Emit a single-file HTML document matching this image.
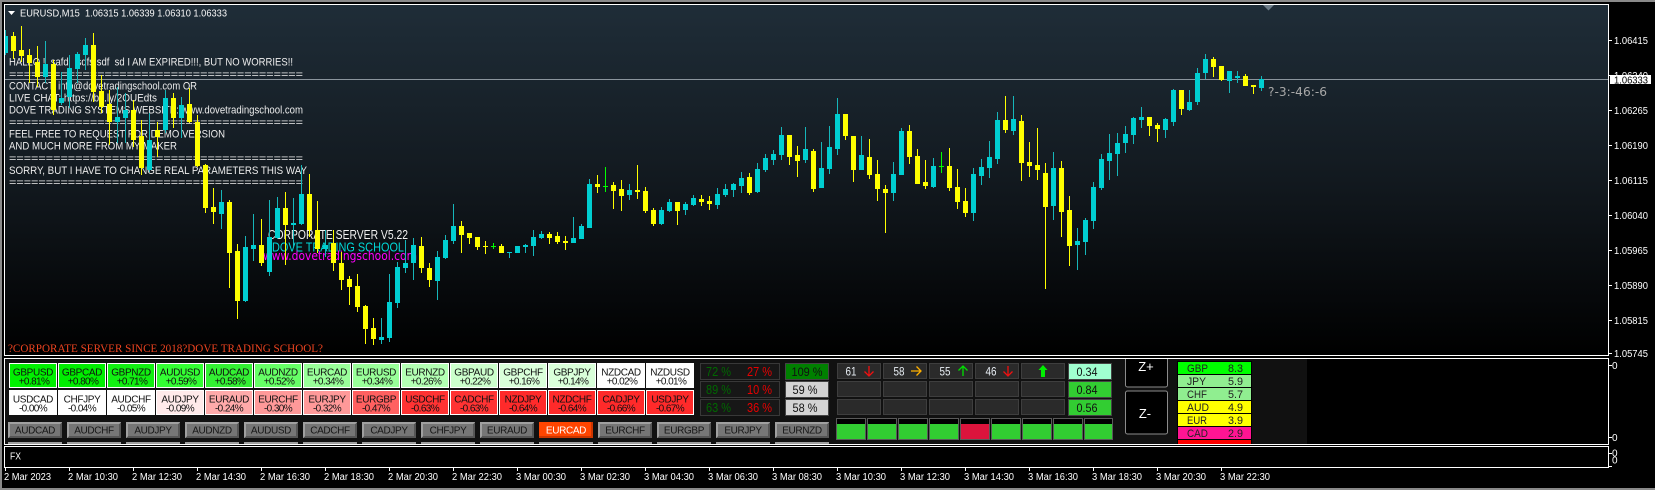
<!DOCTYPE html>
<html><head><meta charset="utf-8"><title>EURUSD,M15</title>
<style>
html,body{margin:0;padding:0;background:#000;width:1655px;height:490px;overflow:hidden}
svg{display:block}
text{font-family:"Liberation Sans",sans-serif;white-space:pre}
.o{font-size:11px;fill:#ececec}
.a{font-size:10px;fill:#fff}
.t{font-size:10px;fill:#fff}
.n{font-size:10px;letter-spacing:-.35px;text-anchor:middle;fill:#111}
.p{font-size:10px;letter-spacing:-.6px;text-anchor:middle;fill:#111}
.b{font-size:10px;letter-spacing:-.35px;text-anchor:middle;fill:#161616}
.g{font-size:13px;fill:#006800}
.r{font-size:13px;fill:#e80000}
.k{font-size:12px;fill:#111;text-anchor:middle}
.w{font-size:12px;fill:#e8eef4;text-anchor:middle}
.c{font-size:11px;fill:#222}
</style></head><body>
<svg width="1655" height="490" viewBox="0 0 1655 490" xmlns="http://www.w3.org/2000/svg">
<defs>
<linearGradient id="bg" x1="0" y1="0" x2="0" y2="1"><stop offset="0" stop-color="#1f2d38"/><stop offset=".5" stop-color="#12191f"/><stop offset="1" stop-color="#000"/></linearGradient>
<g id="btn"><rect width="54" height="16" fill="#a0a0a0"/><path d="M54 0V16H0L2 14H52V2Z" fill="#565656"/><rect x="2" y="2" width="50" height="12" fill="#767676"/></g>
</defs>
<rect width="1655" height="490" fill="#000"/>
<g shape-rendering="crispEdges">
<rect width="1655" height="2" fill="#8a8a8a"/><rect width="2" height="490" fill="#8a8a8a"/><rect y="488" width="1655" height="2" fill="#8a8a8a"/>
<rect x="5" y="5" width="1603" height="350" fill="url(#bg)"/>
</g>

<g class="overlay">
<text class="o" x="9" y="65.500" textLength="284" lengthAdjust="spacingAndGlyphs">HALLO !  safd   sdfs sdf  sd I AM EXPIRED!!!, BUT NO WORRIES!!</text>
<text class="o" x="9" y="78" textLength="294" lengthAdjust="spacingAndGlyphs">========================================</text>
<text class="o" x="9" y="89.500" textLength="188" lengthAdjust="spacingAndGlyphs">CONTACT: info@dovetradingschool.com OR</text>
<text class="o" x="9" y="101.500" textLength="148" lengthAdjust="spacingAndGlyphs">LIVE CHAT: https://bit.ly/2OUEdts</text>
<text class="o" x="9" y="113.500" textLength="294" lengthAdjust="spacingAndGlyphs">DOVE TRADING SYSTEMS WEBSITE: www.dovetradingschool.com</text>
<text class="o" x="9" y="126" textLength="294" lengthAdjust="spacingAndGlyphs">========================================</text>
<text class="o" x="9" y="137.500" textLength="216" lengthAdjust="spacingAndGlyphs">FEEL FREE TO REQUEST FOR DEMO VERSION</text>
<text class="o" x="9" y="149.500" textLength="168" lengthAdjust="spacingAndGlyphs">AND MUCH MORE FROM MY MAKER</text>
<text class="o" x="9" y="162" textLength="294" lengthAdjust="spacingAndGlyphs">========================================</text>
<text class="o" x="9" y="174" textLength="298" lengthAdjust="spacingAndGlyphs">SORRY, BUT I HAVE TO CHANGE REAL PARAMETERS THIS WAY</text>
<text class="o" x="9" y="186" textLength="294" lengthAdjust="spacingAndGlyphs">========================================</text>
<text x="268" y="239" font-size="13" fill="#f0f0f0" textLength="140" lengthAdjust="spacingAndGlyphs">CORPORATE SERVER V5.22</text>
<text x="272" y="251.500" font-size="13" fill="#00d8d8" textLength="132" lengthAdjust="spacingAndGlyphs">DOVE TRADING SCHOOL</text>
<text x="263" y="260" font-size="12" fill="#ff00ff" textLength="154" lengthAdjust="spacingAndGlyphs" style="font-family:'DejaVu Sans',sans-serif">www.dovetradingschool.com</text>
<text x="8" y="352" font-size="12" fill="#ee4420" textLength="315" lengthAdjust="spacingAndGlyphs" style="font-family:'Liberation Serif',serif">?CORPORATE SERVER SINCE 2018?DOVE TRADING SCHOOL?</text>
</g>

<rect x="5" y="79" width="1603" height="1" fill="#8b959d" shape-rendering="crispEdges"/>

<g fill="none" shape-rendering="crispEdges">
<path stroke="#ffff00" stroke-width="1" d="M13.5 32V59M21.5 26V62M29.5 49V83M37.5 46V87M53.5 60V115M93.5 33V102M101.5 75V113M109.5 90V145M133.5 100V147M141.5 120V175M157.5 122V157M173.5 93V128M189.5 88V123M197.5 115V167M205.5 164V213M213.5 188V224M229.5 200V288M237.5 244V319M261.5 219V266M285.5 192V265M309.5 174V237M317.5 201V253M333.5 230V271M341.5 252V290M349.5 276V305M357.5 274V312M365.5 305V344M373.5 318V345M421.5 237V273M429.5 263V287M461.5 221V253M469.5 233V244M477.5 237V250M485.5 241V254M501.5 244V253M549.5 232V244M557.5 232V244M565.5 236V250M597.5 175V193M613.5 182V209M621.5 180V211M637.5 165V199M645.5 187V213M653.5 208V226M677.5 202V225M701.5 195V206M709.5 196V210M749.5 173V195M789.5 135V165M797.5 146V177M813.5 149V192M845.5 114V140M853.5 136V182M869.5 139V179M877.5 160V201M885.5 185V233M909.5 125V164M917.5 149V184M925.5 160V189M949.5 148V191M957.5 169V209M965.5 188V217M1005.5 96V133M1021.5 115V181M1029.5 142V177M1037.5 128V180M1045.5 163V289M1061.5 161V237M1069.5 196V266M1149.5 117V136M1157.5 123V142M1181.5 90V115M1213.5 57V77M1221.5 66V81M1245.5 74V86M1253.5 85V94"/>
<path stroke="#ffff00" stroke-width="5" d="M13.5 36V51M21.5 50V56M29.5 55V63M37.5 62V77M53.5 64V110M93.5 45V92M101.5 91V107M109.5 104V122M133.5 110V140M141.5 136V168M157.5 130V137M173.5 98V118M189.5 104V122M197.5 122V166M205.5 165V208M213.5 207V212M229.5 202V253M237.5 251V301M261.5 245V263M285.5 208V225M309.5 194V230M317.5 230V249M333.5 243V263M341.5 263V280M349.5 279V287M357.5 286V307M365.5 306V329M373.5 328V339M421.5 246V268M429.5 268V280M461.5 226V235M469.5 233V238M477.5 237V247M485.5 246V247M501.5 246V253M549.5 234V238M557.5 236V242M565.5 241V243M597.5 184V187M613.5 185V191M621.5 189V196M637.5 190V192M645.5 191V211M653.5 210V224M677.5 202V211M701.5 199V202M709.5 201V204M749.5 177V193M789.5 135V157M797.5 155V161M813.5 151V189M845.5 114V136M853.5 136V170M869.5 157V175M877.5 174V189M885.5 189V193M909.5 131V157M917.5 156V184M925.5 182V186M949.5 166V188M957.5 187V202M965.5 201V213M1005.5 120V130M1021.5 121V163M1029.5 162V166M1037.5 165V170M1045.5 173V207M1061.5 168V212M1069.5 210V246M1149.5 117V126M1157.5 125V129M1181.5 90V109M1213.5 59V67M1221.5 66V80M1245.5 76V86M1253.5 85V87"/>
<path stroke="#16b6ba" stroke-width="1" d="M5.5 30V55M45.5 41V83M61.5 72V105M69.5 55V108M77.5 52V83M85.5 38V70M117.5 87V143M125.5 93V143M149.5 113V172M165.5 90V133M181.5 97V138M221.5 190V229M245.5 236V302M253.5 214V261M269.5 200V276M277.5 197V239M293.5 198V247M301.5 165V225M325.5 230V257M381.5 318V344M389.5 274V342M397.5 262V308M405.5 240V273M413.5 238V280M437.5 251V300M445.5 235V259M453.5 204V244M509.5 252V258M517.5 246V253M525.5 244V253M533.5 230V256M541.5 231V239M573.5 217V243M581.5 224V239M589.5 179V228M629.5 184V200M661.5 207V225M669.5 199V212M685.5 202V215M693.5 195V206M717.5 188V209M725.5 184V197M733.5 183V197M741.5 172V193M757.5 163V193M765.5 154V172M773.5 150V165M781.5 127V160M805.5 127V163M821.5 142V188M829.5 126V174M837.5 98V155M861.5 136V170M893.5 162V201M901.5 128V175M933.5 158V188M973.5 168V221M981.5 159V185M989.5 141V178M997.5 112V164M1013.5 96V135M1053.5 152V220M1077.5 228V270M1085.5 218V255M1093.5 182V229M1101.5 154V190M1109.5 134V180M1117.5 133V176M1125.5 126V153M1133.5 117V144M1141.5 107V128M1165.5 118V138M1173.5 89V126M1189.5 90V111M1197.5 68V105M1205.5 54V79M1229.5 71V93M1237.5 71V83M1261.5 76V91"/>
<path stroke="#00ced1" stroke-width="5" d="M45.5 64V77M61.5 98V103M69.5 68V97M77.5 54V69M85.5 45V55M117.5 117V122M125.5 110V118M149.5 140V170M165.5 98V130M181.5 105V118M221.5 202V214M245.5 247V301M253.5 245V249M269.5 237V272M277.5 208V238M293.5 223V225M301.5 194V224M325.5 245V249M381.5 337V340M389.5 302V338M397.5 267V303M405.5 263V268M413.5 245V263M437.5 257V281M445.5 240V258M453.5 226V241M509.5 252V253M517.5 246V253M525.5 245V247M533.5 237V246M541.5 234V238M573.5 238V243M581.5 226V239M589.5 184V228M629.5 190V195M661.5 210V224M669.5 202V211M685.5 204V210M693.5 198V205M717.5 194V205M725.5 189V195M733.5 184V190M741.5 178V186M757.5 169V192M765.5 158V170M773.5 154V160M781.5 135V155M805.5 149V160M821.5 168V188M829.5 147V169M837.5 114V149M861.5 155V170M893.5 174V193M901.5 131V175M933.5 166V187M973.5 174V213M981.5 167V176M989.5 157V168M997.5 120V159M1013.5 119V131M1053.5 168V206M1077.5 241V245M1085.5 220V242M1093.5 187V221M1101.5 159V188M1109.5 153V161M1117.5 143V154M1125.5 134V143M1133.5 118V135M1141.5 117V120M1165.5 119V130M1173.5 90V122M1189.5 102V110M1197.5 73V102M1205.5 59V73M1229.5 71V81M1237.5 76V78M1261.5 79V88"/>
<rect x="5" y="36" width="3" height="17" fill="#00ced1"/>
<path stroke="#00ff00" stroke-width="1" d="M493.5 243V249M605.5 167V192M941.5 152V173M491 246.5H496M603 186.5H608M939 166.5H944"/>
</g>

<path d="M1263 5h11l-5.500 5.500z" fill="#6d7c88"/>
<path d="M8 11h7l-3.500 4z" fill="#fff"/>
<text x="20" y="16.500" font-size="10.500" fill="#f8f8f8" textLength="207" lengthAdjust="spacingAndGlyphs">EURUSD,M15  1.06315 1.06339 1.06310 1.06333</text>
<text x="1268" y="96" font-size="12" fill="#a8a8a8" textLength="59" lengthAdjust="spacingAndGlyphs" style="font-family:'DejaVu Sans',sans-serif">?-3:-46:-6</text>

<g shape-rendering="crispEdges" fill="#fff">
<rect x="4" y="4" width="1605" height="1"/>
<rect x="4" y="4" width="1" height="352"/>
<rect x="1608" y="4" width="1" height="352"/>
<rect x="4" y="355" width="1605" height="1"/>
</g>

<rect x="5" y="359" width="1302" height="85" fill="#111" shape-rendering="crispEdges"/>

<g shape-rendering="crispEdges">
<rect x="9" y="363" width="48" height="25" fill="#fff"/><rect x="10" y="364" width="46" height="23" fill="#00f000"/>
<rect x="58" y="363" width="48" height="25" fill="#fff"/><rect x="59" y="364" width="46" height="23" fill="#00ee00"/>
<rect x="107" y="363" width="48" height="25" fill="#fff"/><rect x="108" y="364" width="46" height="23" fill="#11f011"/>
<rect x="156" y="363" width="48" height="25" fill="#fff"/><rect x="157" y="364" width="46" height="23" fill="#33ff33"/>
<rect x="205" y="363" width="48" height="25" fill="#fff"/><rect x="206" y="364" width="46" height="23" fill="#33f033"/>
<rect x="254" y="363" width="48" height="25" fill="#fff"/><rect x="255" y="364" width="46" height="23" fill="#66ff66"/>
<rect x="303" y="363" width="48" height="25" fill="#fff"/><rect x="304" y="364" width="46" height="23" fill="#99ff99"/>
<rect x="352" y="363" width="48" height="25" fill="#fff"/><rect x="353" y="364" width="46" height="23" fill="#99ff99"/>
<rect x="401" y="363" width="48" height="25" fill="#fff"/><rect x="402" y="364" width="46" height="23" fill="#b3ffb3"/>
<rect x="450" y="363" width="48" height="25" fill="#fff"/><rect x="451" y="364" width="46" height="23" fill="#ccffcc"/>
<rect x="499" y="363" width="48" height="25" fill="#fff"/><rect x="500" y="364" width="46" height="23" fill="#d9ffd9"/>
<rect x="548" y="363" width="48" height="25" fill="#fff"/><rect x="549" y="364" width="46" height="23" fill="#d9ffd9"/>
<rect x="597" y="363" width="48" height="25" fill="#fff"/>
<rect x="646" y="363" width="48" height="25" fill="#fff"/>

<rect x="9" y="390" width="48" height="25" fill="#fff"/>
<rect x="58" y="390" width="48" height="25" fill="#fff"/>
<rect x="107" y="390" width="48" height="25" fill="#fff"/>
<rect x="156" y="390" width="48" height="25" fill="#fff"/><rect x="157" y="391" width="46" height="23" fill="#ffeaea"/>
<rect x="205" y="390" width="48" height="25" fill="#fff"/><rect x="206" y="391" width="46" height="23" fill="#ffaaaa"/>
<rect x="254" y="390" width="48" height="25" fill="#fff"/><rect x="255" y="391" width="46" height="23" fill="#ff9999"/>
<rect x="303" y="390" width="48" height="25" fill="#fff"/><rect x="304" y="391" width="46" height="23" fill="#ff9999"/>
<rect x="352" y="390" width="48" height="25" fill="#fff"/><rect x="353" y="391" width="46" height="23" fill="#ff6060"/>
<rect x="401" y="390" width="48" height="25" fill="#fff"/><rect x="402" y="391" width="46" height="23" fill="#ff3333"/>
<rect x="450" y="390" width="48" height="25" fill="#fff"/><rect x="451" y="391" width="46" height="23" fill="#ff3333"/>
<rect x="499" y="390" width="48" height="25" fill="#fff"/><rect x="500" y="391" width="46" height="23" fill="#ff2a2a"/>
<rect x="548" y="390" width="48" height="25" fill="#fff"/><rect x="549" y="391" width="46" height="23" fill="#ff2a2a"/>
<rect x="597" y="390" width="48" height="25" fill="#fff"/><rect x="598" y="391" width="46" height="23" fill="#ff2a2a"/>
<rect x="646" y="390" width="48" height="25" fill="#fff"/><rect x="647" y="391" width="46" height="23" fill="#ff2a2a"/>
</g>

<g>
<text class="n" x="33" y="375.500">GBPUSD</text><text class="p" x="34" y="384.500">+0.81%</text>
<text class="n" x="82" y="375.500">GBPCAD</text><text class="p" x="83" y="384.500">+0.80%</text>
<text class="n" x="131" y="375.500">GBPNZD</text><text class="p" x="132" y="384.500">+0.71%</text>
<text class="n" x="180" y="375.500">AUDUSD</text><text class="p" x="181" y="384.500">+0.59%</text>
<text class="n" x="229" y="375.500">AUDCAD</text><text class="p" x="230" y="384.500">+0.58%</text>
<text class="n" x="278" y="375.500">AUDNZD</text><text class="p" x="279" y="384.500">+0.52%</text>
<text class="n" x="327" y="375.500">EURCAD</text><text class="p" x="328" y="384.500">+0.34%</text>
<text class="n" x="376" y="375.500">EURUSD</text><text class="p" x="377" y="384.500">+0.34%</text>
<text class="n" x="425" y="375.500">EURNZD</text><text class="p" x="426" y="384.500">+0.26%</text>
<text class="n" x="474" y="375.500">GBPAUD</text><text class="p" x="475" y="384.500">+0.22%</text>
<text class="n" x="523" y="375.500">GBPCHF</text><text class="p" x="524" y="384.500">+0.16%</text>
<text class="n" x="572" y="375.500">GBPJPY</text><text class="p" x="573" y="384.500">+0.14%</text>
<text class="n" x="621" y="375.500">NZDCAD</text><text class="p" x="622" y="384.500">+0.02%</text>
<text class="n" x="670" y="375.500">NZDUSD</text><text class="p" x="671" y="384.500">+0.01%</text>
<text class="n" x="33" y="402.500">USDCAD</text><text class="p" x="33" y="411.500">-0.00%</text>
<text class="n" x="82" y="402.500">CHFJPY</text><text class="p" x="82" y="411.500">-0.04%</text>
<text class="n" x="131" y="402.500">AUDCHF</text><text class="p" x="131" y="411.500">-0.05%</text>
<text class="n" x="180" y="402.500">AUDJPY</text><text class="p" x="180" y="411.500">-0.09%</text>
<text class="n" x="229" y="402.500">EURAUD</text><text class="p" x="229" y="411.500">-0.24%</text>
<text class="n" x="278" y="402.500">EURCHF</text><text class="p" x="278" y="411.500">-0.30%</text>
<text class="n" x="327" y="402.500">EURJPY</text><text class="p" x="327" y="411.500">-0.32%</text>
<text class="n" x="376" y="402.500">EURGBP</text><text class="p" x="376" y="411.500">-0.47%</text>
<text class="n" x="425" y="402.500">USDCHF</text><text class="p" x="425" y="411.500">-0.63%</text>
<text class="n" x="474" y="402.500">CADCHF</text><text class="p" x="474" y="411.500">-0.63%</text>
<text class="n" x="523" y="402.500">NZDJPY</text><text class="p" x="523" y="411.500">-0.64%</text>
<text class="n" x="572" y="402.500">NZDCHF</text><text class="p" x="572" y="411.500">-0.64%</text>
<text class="n" x="621" y="402.500">CADJPY</text><text class="p" x="621" y="411.500">-0.66%</text>
<text class="n" x="670" y="402.500">USDJPY</text><text class="p" x="670" y="411.500">-0.67%</text>
</g>

<g shape-rendering="crispEdges">
<use href="#btn" x="8" y="422"/><use href="#btn" x="67" y="422"/><use href="#btn" x="126" y="422"/><use href="#btn" x="185" y="422"/><use href="#btn" x="244" y="422"/><use href="#btn" x="303" y="422"/><use href="#btn" x="362" y="422"/><use href="#btn" x="421" y="422"/><use href="#btn" x="480" y="422"/>
<rect x="539" y="422" width="54" height="16" fill="#ff4500"/><rect x="539" y="436" width="54" height="2" fill="#cc3600"/><rect x="591" y="422" width="2" height="16" fill="#cc3600"/>
<use href="#btn" x="598" y="422"/><use href="#btn" x="657" y="422"/><use href="#btn" x="716" y="422"/><use href="#btn" x="775" y="422"/>
<path fill="#a0a0a0" d="M8 442h54v2H8zM67 442h54v2H67zM126 442h54v2h-54zM185 442h54v2h-54zM244 442h54v2h-54zM303 442h54v2h-54zM362 442h54v2h-54zM421 442h54v2h-54zM480 442h54v2h-54zM539 442h54v2h-54zM598 442h54v2h-54zM657 442h54v2h-54zM716 442h54v2h-54zM775 442h54v2h-54z"/>
</g>
<g>
<text class="b" x="35" y="433.500">AUDCAD</text><text class="b" x="94" y="433.500">AUDCHF</text><text class="b" x="153" y="433.500">AUDJPY</text><text class="b" x="212" y="433.500">AUDNZD</text><text class="b" x="271" y="433.500">AUDUSD</text><text class="b" x="330" y="433.500">CADCHF</text><text class="b" x="389" y="433.500">CADJPY</text><text class="b" x="448" y="433.500">CHFJPY</text><text class="b" x="507" y="433.500">EURAUD</text><text class="b" x="566" y="433.500" style="fill:#fff">EURCAD</text><text class="b" x="625" y="433.500">EURCHF</text><text class="b" x="684" y="433.500">EURGBP</text><text class="b" x="743" y="433.500">EURJPY</text><text class="b" x="802" y="433.500">EURNZD</text>
</g>

<g shape-rendering="crispEdges" fill="#171717" stroke="#383838">
<rect x="700.500" y="363.500" width="79" height="16"/><rect x="700.500" y="381.500" width="79" height="16"/><rect x="700.500" y="399.500" width="79" height="16"/>
</g>
<g>
<text class="g" x="706" y="376" textLength="25" lengthAdjust="spacingAndGlyphs">72 %</text><text class="r" x="747" y="376" textLength="25" lengthAdjust="spacingAndGlyphs">27 %</text>
<text class="g" x="706" y="394" textLength="25" lengthAdjust="spacingAndGlyphs">89 %</text><text class="r" x="747" y="394" textLength="25" lengthAdjust="spacingAndGlyphs">10 %</text>
<text class="g" x="706" y="412" textLength="25" lengthAdjust="spacingAndGlyphs">63 %</text><text class="r" x="747" y="412" textLength="25" lengthAdjust="spacingAndGlyphs">36 %</text>
</g>
<g shape-rendering="crispEdges" stroke="#444">
<rect x="785.500" y="363.500" width="43" height="16" fill="#008000"/><rect x="785.500" y="381.500" width="43" height="16" fill="#d3d3d3"/><rect x="785.500" y="399.500" width="43" height="16" fill="#d3d3d3"/>
</g>
<text class="k" x="807" y="376" textLength="31" lengthAdjust="spacingAndGlyphs">109 %</text>
<text class="k" x="805" y="394" textLength="25" lengthAdjust="spacingAndGlyphs">59 %</text>
<text class="k" x="805" y="412" textLength="25" lengthAdjust="spacingAndGlyphs">58 %</text>

<g shape-rendering="crispEdges" fill="#2a2a2a" stroke="#3e3e3e">
<rect x="837.500" y="363.500" width="43" height="15"/><rect x="883.500" y="363.500" width="43" height="15"/><rect x="929.500" y="363.500" width="43" height="15"/><rect x="975.500" y="363.500" width="43" height="15"/><rect x="1021.500" y="363.500" width="43" height="15"/>
<rect x="837.500" y="381.500" width="43" height="15"/><rect x="883.500" y="381.500" width="43" height="15"/><rect x="929.500" y="381.500" width="43" height="15"/><rect x="975.500" y="381.500" width="43" height="15"/><rect x="1021.500" y="381.500" width="43" height="15"/>
<rect x="837.500" y="399.500" width="43" height="15"/><rect x="883.500" y="399.500" width="43" height="15"/><rect x="929.500" y="399.500" width="43" height="15"/><rect x="975.500" y="399.500" width="43" height="15"/><rect x="1021.500" y="399.500" width="43" height="15"/>
</g>
<text class="w" x="851" y="375.500" textLength="11" lengthAdjust="spacingAndGlyphs">61</text><text class="w" x="899" y="375.500" textLength="11" lengthAdjust="spacingAndGlyphs">58</text><text class="w" x="945" y="375.500" textLength="11" lengthAdjust="spacingAndGlyphs">55</text><text class="w" x="991" y="375.500" textLength="11" lengthAdjust="spacingAndGlyphs">46</text>
<g fill="none" stroke-width="1.300">
<path stroke="#f01010" d="M869 366V376M864.500 371.500L869 376L873.500 371.500"/>
<path stroke="#ffb000" d="M911 371H921M916.500 366.500L921 371L916.500 375.500"/>
<path stroke="#00e000" d="M963 376V366M958.500 370.500L963 366L967.500 370.500"/>
<path stroke="#f01010" d="M1008 366V376M1003.500 371.500L1008 376L1012.500 371.500"/>
</g>
<path fill="#00ee00" d="M1043 365l4.500 5h-2.500v7h-4v-7h-2.500z"/>
<g shape-rendering="crispEdges" stroke="#444">
<rect x="1068.500" y="363.500" width="43" height="16" fill="#a0ffd0"/><rect x="1068.500" y="381.500" width="43" height="16" fill="#32cd32"/><rect x="1068.500" y="399.500" width="43" height="16" fill="#32cd32"/>
</g>
<text class="k" x="1087" y="376" textLength="21" lengthAdjust="spacingAndGlyphs">0.34</text><text class="k" x="1087" y="394" textLength="21" lengthAdjust="spacingAndGlyphs">0.84</text><text class="k" x="1087" y="412" textLength="21" lengthAdjust="spacingAndGlyphs">0.56</text>

<g shape-rendering="crispEdges" stroke="#5a5a5a">
<rect x="836.500" y="418.500" width="29" height="21" fill="#000"/><rect x="867.500" y="418.500" width="29" height="21" fill="#000"/><rect x="898.500" y="418.500" width="29" height="21" fill="#000"/><rect x="929.500" y="418.500" width="29" height="21" fill="#000"/><rect x="960.500" y="418.500" width="29" height="21" fill="#000"/><rect x="991.500" y="418.500" width="29" height="21" fill="#000"/><rect x="1022.500" y="418.500" width="29" height="21" fill="#000"/><rect x="1053.500" y="418.500" width="29" height="21" fill="#000"/><rect x="1084.500" y="418.500" width="28" height="21" fill="#000"/>
</g>
<g shape-rendering="crispEdges" fill="#32cd32">
<rect x="837" y="424" width="28" height="15"/><rect x="868" y="424" width="28" height="15"/><rect x="899" y="424" width="28" height="15"/><rect x="930" y="424" width="28" height="15"/><rect x="961" y="424" width="28" height="15" fill="#dc143c"/><rect x="992" y="424" width="28" height="15"/><rect x="1023" y="424" width="28" height="15"/><rect x="1054" y="424" width="28" height="15"/><rect x="1085" y="424" width="27" height="15"/>
</g>

<rect x="1125.500" y="340.500" width="42" height="46.500" rx="2" fill="#000" stroke="#8c8c8c" clip-path="inset(18.500px -1px -1px -1px)"/>
<rect x="1125.500" y="391" width="42" height="43" rx="2" fill="#000" stroke="#8c8c8c"/>
<text x="1146" y="371" font-size="13" fill="#fff" text-anchor="middle">Z+</text>
<text x="1145" y="418" font-size="13" fill="#fff" text-anchor="middle">Z-</text>

<g shape-rendering="crispEdges">
<rect x="1177" y="361" width="75" height="83" fill="#000"/>
<rect x="1178" y="362" width="73" height="12" fill="#00ff00"/>
<rect x="1178" y="375" width="73" height="12" fill="#90ee90"/>
<rect x="1178" y="388" width="73" height="12" fill="#90ee90"/>
<rect x="1178" y="401" width="73" height="12" fill="#ffff00"/>
<rect x="1178" y="414" width="73" height="12" fill="#ffff00"/>
<rect x="1178" y="427" width="73" height="12" fill="#ff1493"/>
<rect x="1178" y="440" width="73" height="4" fill="#ff0000"/>
</g>
<text class="c" x="1187" y="372" textLength="21" lengthAdjust="spacingAndGlyphs">GBP</text><text class="c" x="1228" y="372" textLength="15" lengthAdjust="spacingAndGlyphs">8.3</text>
<text class="c" x="1187" y="385" textLength="19" lengthAdjust="spacingAndGlyphs">JPY</text><text class="c" x="1228" y="385" textLength="15" lengthAdjust="spacingAndGlyphs">5.9</text>
<text class="c" x="1187" y="398" textLength="20" lengthAdjust="spacingAndGlyphs">CHF</text><text class="c" x="1228" y="398" textLength="15" lengthAdjust="spacingAndGlyphs">5.7</text>
<text class="c" x="1187" y="411" textLength="22" lengthAdjust="spacingAndGlyphs">AUD</text><text class="c" x="1228" y="411" textLength="15" lengthAdjust="spacingAndGlyphs">4.9</text>
<text class="c" x="1187" y="424" textLength="20" lengthAdjust="spacingAndGlyphs">EUR</text><text class="c" x="1228" y="424" textLength="15" lengthAdjust="spacingAndGlyphs">3.9</text>
<text class="c" x="1187" y="437" textLength="21" lengthAdjust="spacingAndGlyphs">CAD</text><text class="c" x="1228" y="437" textLength="15" lengthAdjust="spacingAndGlyphs">2.9</text>

<g shape-rendering="crispEdges" fill="#fff">
<rect x="4" y="358" width="1605" height="1"/>
<rect x="4" y="444" width="1605" height="1"/>
<rect x="4" y="358" width="1" height="87"/>
<rect x="1608" y="358" width="1" height="87"/>
<rect x="4" y="446" width="1605" height="1"/>
<rect x="4" y="467" width="1605" height="1"/>
<rect x="4" y="446" width="1" height="22"/>
<rect x="1608" y="446" width="1" height="22"/>
</g>

<text x="10" y="459.500" font-size="10" fill="#fff" textLength="11" lengthAdjust="spacingAndGlyphs">FX</text>

<g shape-rendering="crispEdges" fill="#fff">
<path d="M1609 40h3v1h-3zM1609 75h3v1h-3zM1609 110h3v1h-3zM1609 145h3v1h-3zM1609 180h3v1h-3zM1609 215h3v1h-3zM1609 250h3v1h-3zM1609 285h3v1h-3zM1609 320h3v1h-3zM1609 353h3v1h-3zM1609 365h3v1h-3zM1609 437h3v1h-3zM1609 453h3v1h-3zM1609 466h3v1h-3z"/>
<path d="M5 468h1v3H5zM69 468h1v3h-1zM133 468h1v3h-1zM197 468h1v3h-1zM261 468h1v3h-1zM325 468h1v3h-1zM389 468h1v3h-1zM453 468h1v3h-1zM517 468h1v3h-1zM581 468h1v3h-1zM645 468h1v3h-1zM709 468h1v3h-1zM773 468h1v3h-1zM837 468h1v3h-1zM901 468h1v3h-1zM965 468h1v3h-1zM1029 468h1v3h-1zM1093 468h1v3h-1zM1157 468h1v3h-1zM1221 468h1v3h-1z"/>
</g>
<g>
<text class="a" x="1614" y="44" textLength="34" lengthAdjust="spacingAndGlyphs">1.06415</text>
<text class="a" x="1614" y="79" textLength="34" lengthAdjust="spacingAndGlyphs">1.06340</text>
<rect x="1610" y="75" width="41" height="9" fill="#fff" shape-rendering="crispEdges"/>
<text class="a" x="1614" y="83.500" textLength="34" lengthAdjust="spacingAndGlyphs" style="fill:#000">1.06333</text>
<text class="a" x="1614" y="114" textLength="34" lengthAdjust="spacingAndGlyphs">1.06265</text>
<text class="a" x="1614" y="149" textLength="34" lengthAdjust="spacingAndGlyphs">1.06190</text>
<text class="a" x="1614" y="184" textLength="34" lengthAdjust="spacingAndGlyphs">1.06115</text>
<text class="a" x="1614" y="219" textLength="34" lengthAdjust="spacingAndGlyphs">1.06040</text>
<text class="a" x="1614" y="254" textLength="34" lengthAdjust="spacingAndGlyphs">1.05965</text>
<text class="a" x="1614" y="289" textLength="34" lengthAdjust="spacingAndGlyphs">1.05890</text>
<text class="a" x="1614" y="324" textLength="34" lengthAdjust="spacingAndGlyphs">1.05815</text>
<text class="a" x="1614" y="357" textLength="34" lengthAdjust="spacingAndGlyphs">1.05745</text>
<text class="a" x="1612" y="369">0</text>
<text class="a" x="1612" y="441">0</text>
<text class="a" x="1612" y="456.500">0</text>
<text class="a" x="1612" y="463.500">0</text>
</g>
<g>
<text class="t" x="4" y="480" textLength="47" lengthAdjust="spacingAndGlyphs">2 Mar 2023</text>
<text class="t" x="68" y="480" textLength="50" lengthAdjust="spacingAndGlyphs">2 Mar 10:30</text>
<text class="t" x="132" y="480" textLength="50" lengthAdjust="spacingAndGlyphs">2 Mar 12:30</text>
<text class="t" x="196" y="480" textLength="50" lengthAdjust="spacingAndGlyphs">2 Mar 14:30</text>
<text class="t" x="260" y="480" textLength="50" lengthAdjust="spacingAndGlyphs">2 Mar 16:30</text>
<text class="t" x="324" y="480" textLength="50" lengthAdjust="spacingAndGlyphs">2 Mar 18:30</text>
<text class="t" x="388" y="480" textLength="50" lengthAdjust="spacingAndGlyphs">2 Mar 20:30</text>
<text class="t" x="452" y="480" textLength="50" lengthAdjust="spacingAndGlyphs">2 Mar 22:30</text>
<text class="t" x="516" y="480" textLength="50" lengthAdjust="spacingAndGlyphs">3 Mar 00:30</text>
<text class="t" x="580" y="480" textLength="50" lengthAdjust="spacingAndGlyphs">3 Mar 02:30</text>
<text class="t" x="644" y="480" textLength="50" lengthAdjust="spacingAndGlyphs">3 Mar 04:30</text>
<text class="t" x="708" y="480" textLength="50" lengthAdjust="spacingAndGlyphs">3 Mar 06:30</text>
<text class="t" x="772" y="480" textLength="50" lengthAdjust="spacingAndGlyphs">3 Mar 08:30</text>
<text class="t" x="836" y="480" textLength="50" lengthAdjust="spacingAndGlyphs">3 Mar 10:30</text>
<text class="t" x="900" y="480" textLength="50" lengthAdjust="spacingAndGlyphs">3 Mar 12:30</text>
<text class="t" x="964" y="480" textLength="50" lengthAdjust="spacingAndGlyphs">3 Mar 14:30</text>
<text class="t" x="1028" y="480" textLength="50" lengthAdjust="spacingAndGlyphs">3 Mar 16:30</text>
<text class="t" x="1092" y="480" textLength="50" lengthAdjust="spacingAndGlyphs">3 Mar 18:30</text>
<text class="t" x="1156" y="480" textLength="50" lengthAdjust="spacingAndGlyphs">3 Mar 20:30</text>
<text class="t" x="1220" y="480" textLength="50" lengthAdjust="spacingAndGlyphs">3 Mar 22:30</text>
</g>
</svg>
</body></html>
